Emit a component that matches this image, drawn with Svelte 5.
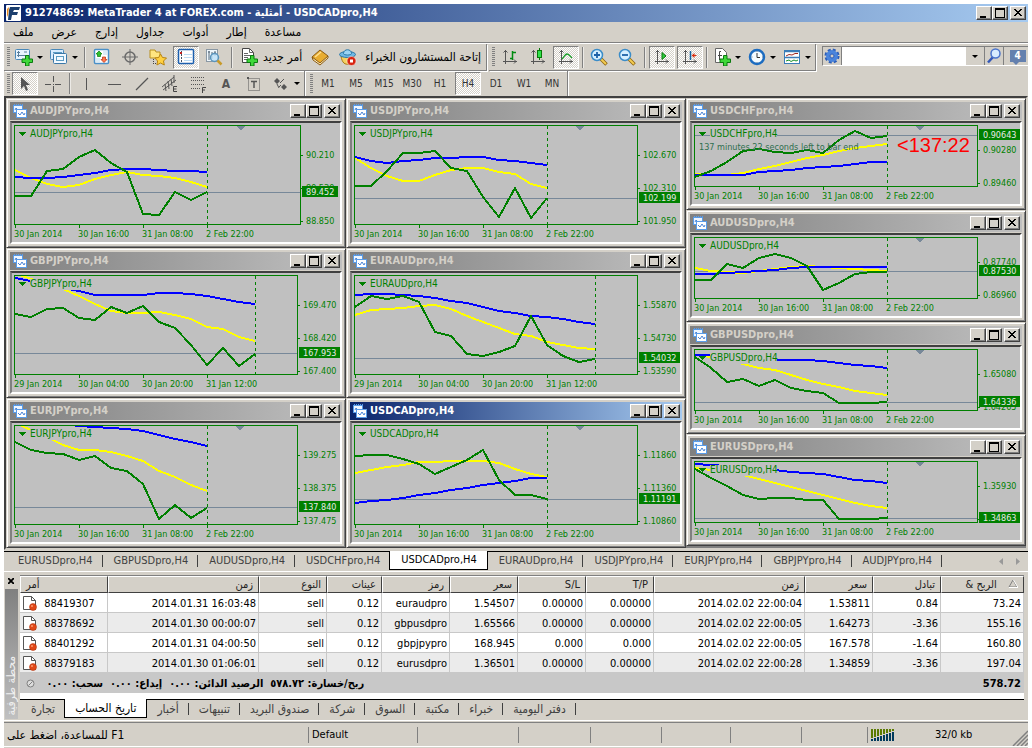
<script>
  const shortDates = ['30 Jan 2014', '30 Jan 16:00', '31 Jan 08:00', '2 Feb 22:00'];
  const longDates = ['29 Jan 2014', '30 Jan 04:00', '30 Jan 20:00', '31 Jan 12:00'];

  // series hold one y value per bar, bars are 16px apart
  const columns = [
    [
      {
        name: 'AUDJPYpro,H4', size: 'tall', narrow: true, dates: shortDates, price: 67, last: '89.452', marker: 226,
        ticks: [[30, '90.210'], [63, '89.530'], [96, '88.850']],
        yellow: [45, 53, 59, 62, 60, 54, 50, 47, 50, 51, 53, 57, 62],
        blue: [52, 53, 53, 52, 50, 48, 45, 44, 44, 45, 46, 46, 47],
        green: [71, 71, 46, 44, 32, 25, 38, 47, 89, 90, 67, 75, 67]
      },
      {
        name: 'GBPJPYpro,H4', size: 'tall', dates: longDates, price: 78, last: '167.953',
        ticks: [[30, '169.470'], [63, '168.420'], [96, '167.400']],
        yellow: [-2, 4, 10, 14, 21, 29, 36, 38, 38, 37, 40, 44, 52, 54, 62, 66],
        blue: [3, 6, 9, 13, 16, 20, 20, 20, 20, 18, 18, 19, 21, 24, 27, 29],
        green: [39, 42, 34, 33, 43, 45, 32, 38, 31, 47, 53, 70, 90, 73, 91, 79]
      },
      {
        name: 'EURJPYpro,H4', size: 'tall', dates: shortDates, price: 82, last: '137.840', marker: 225,
        ticks: [[30, '139.275'], [63, '138.375'], [96, '137.475']],
        yellow: [-2, 5, 12, 20, 25, 25, 27, 31, 36, 46, 52, 60, 66],
        blue: [-6, -5, -3, -1, 1, 2, 3, 4, 6, 10, 14, 17, 21],
        green: [17, 25, 28, 29, 35, 31, 43, 46, 59, 94, 80, 93, 83]
      }
    ],
    [
      {
        name: 'USDJPYpro,H4', size: 'tall', dates: shortDates, price: 73, last: '102.199', marker: 225,
        ticks: [[30, '102.670'], [63, '102.310'], [96, '101.950']],
        yellow: [33, 43, 51, 56, 56, 50, 45, 43, 43, 47, 49, 59, 63],
        blue: [32, 36, 38, 36, 35, 33, 33, 32, 32, 35, 36, 38, 40],
        green: [61, 61, 46, 28, 28, 26, 43, 46, 72, 92, 63, 93, 73]
      },
      {
        name: 'EURAUDpro,H4', size: 'tall', dates: longDates, price: 83, last: '1.54032',
        ticks: [[30, '1.55870'], [63, '1.54730'], [96, '1.53590']],
        yellow: [40, 35, 34, 33, 31, 30, 34, 41, 47, 53, 59, 61, 67, 70, 73, 74],
        blue: [20, 19, 19, 20, 21, 23, 26, 28, 32, 36, 38, 41, 42, 44, 47, 49],
        green: [32, 21, 24, 21, 27, 57, 61, 79, 81, 77, 71, 41, 70, 81, 87, 84]
      },
      {
        name: 'USDCADpro,H4', size: 'tall', active: true, dates: shortDates, price: 74, last: '1.11191', marker: 225,
        ticks: [[30, '1.11860'], [63, '1.11360'], [96, '1.10860']],
        yellow: [48, 45, 42, 40, 37, 37, 36, 36, 36, 38, 44, 49, 52],
        blue: [78, 76, 75, 73, 70, 68, 65, 63, 60, 58, 56, 53, 53],
        green: [31, 30, 30, 34, 39, 49, 42, 35, 25, 55, 70, 70, 74]
      }
    ],
    [
      {
        name: 'USDCHFpro,H4', size: 'short', dates: shortDates, price: 10, last: '0.90643', marker: 225, timer: true,
        ticks: [[25, '0.90280'], [58, '0.89460']],
        yellow: [49, 50, 50, 48, 44, 41, 37, 33, 30, 26, 23, 21, 19],
        blue: [50, 50, 50, 50, 47, 46, 45, 43, 42, 41, 39, 37, 37],
        green: [52, 46, 37, 26, 24, 27, 28, 25, 28, 15, 6, 13, 11]
      },
      {
        name: 'AUDUSDpro,H4', size: 'short', dates: shortDates, price: 34, last: '0.87530', marker: 225,
        ticks: [[25, '0.87740'], [58, '0.86960']],
        yellow: [31, 34, 35, 36, 34, 32, 30, 29, 30, 31, 32, 33, 34],
        blue: [37, 37, 36, 35, 34, 33, 31, 30, 30, 30, 30, 30, 30],
        green: [43, 43, 27, 31, 21, 17, 21, 29, 53, 46, 37, 35, 35]
      },
      {
        name: 'GBPUSDpro,H4', size: 'short', dates: shortDates, price: 53, last: '1.64336', marker: 225,
        ticks: [[25, '1.65080'], [58, '1.64265']],
        yellow: [6, 8, 11, 15, 19, 21, 26, 31, 35, 38, 42, 44, 46],
        blue: [6, 6, 8, 9, 10, 11, 11, 11, 12, 14, 16, 17, 19],
        green: [8, 19, 33, 30, 37, 31, 39, 42, 44, 54, 54, 54, 53]
      },
      {
        name: 'EURUSDpro,H4', size: 'short', dates: shortDates, price: 57, last: '1.34863', marker: 225,
        ticks: [[25, '1.35930'], [58, '']],
        yellow: [7, 9, 11, 14, 18, 22, 26, 30, 34, 38, 42, 45, 47],
        blue: [3, 4, 5, 6, 8, 9, 11, 12, 13, 16, 19, 20, 22],
        green: [8, 17, 25, 34, 38, 37, 37, 39, 39, 58, 58, 58, 57]
      }
    ]
  ];

  const line = (ys) => ys.map((y, i) => `${i * 16},${y}`).join(' ');

  const menu = ['ملف', 'عرض', 'إدارج', 'جداول', 'أدوات', 'إطار', 'مساعدة'];
  const frames = ['M1', 'M5', 'M15', 'M30', 'H1', 'H4', 'D1', 'W1', 'MN'];
  const chartTabs = ['EURUSDpro,H4', 'GBPUSDpro,H4', 'AUDUSDpro,H4', 'USDCHFpro,H4', 'USDCADpro,H4',
    'EURAUDpro,H4', 'USDJPYpro,H4', 'EURJPYpro,H4', 'GBPJPYpro,H4', 'AUDJPYpro,H4'];
  const terminalTabs = ['تجارة', 'تاريخ الحساب', 'أخبار', 'تنبيهات', 'صندوق البريد', 'شركة', 'السوق', 'مكتبة', 'خبراء', 'دفتر اليومية'];

  const heads = ['أمر', 'زمن', 'النوع', 'عينات', 'رمز', 'سعر', 'S/L', 'T/P', 'زمن', 'سعر', 'تبادل', 'الربح &'];
  const widths = [88, 151, 68, 55, 68, 68, 68, 68, 151, 68, 68, 83];
  const orders = [
    ['88419307', '2014.01.31 16:03:48', 'sell', '0.12', 'euraudpro', '1.54507', '0.00000', '0.00000', '2014.02.02 22:00:04', '1.53811', '0.84', '73.24'],
    ['88378692', '2014.01.30 00:00:07', 'sell', '0.12', 'gbpusdpro', '1.65566', '0.00000', '0.00000', '2014.02.02 22:00:05', '1.64273', '-3.36', '155.16'],
    ['88401292', '2014.01.31 04:00:50', 'sell', '0.12', 'gbpjpypro', '168.945', '0.000', '0.000', '2014.02.02 22:00:05', '167.578', '-1.64', '160.80'],
    ['88379183', '2014.01.30 01:06:01', 'sell', '0.12', 'eurusdpro', '1.36501', '0.00000', '0.00000', '2014.02.02 22:00:28', '1.34859', '-3.36', '197.04']
  ];

  let activeFrame = $state('H4');
  let activeChart = $state('USDCADpro,H4');
  let activeTab = $state('تاريخ الحساب');
  let search = $state('');
</script>

{#snippet winButtons()}
  <span class="winButtons">
    <button aria-label="Minimize"><svg width="12" height="10"><path d="M2 8h6v2H2z" /></svg></button>
    <button aria-label="Maximize"><svg width="12" height="10"><path d="M1 0h10v10H1zM2 2v7h8V2z" fill-rule="evenodd" /></svg></button>
    <button class="close" aria-label="Close"><svg width="12" height="10"><path d="M2 1l7 7M3 1l7 7M9 1L2 8M10 1L3 8" stroke="#000" shape-rendering="crispEdges" /></svg></button>
  </span>
{/snippet}

{#snippet plus()}
  <path d="M10.500 7.500h3.500v3.500h3.500v3.500H14V18h-3.500v-3.500H7V11h3.500z" fill="#3fd83a" stroke="#0b7a10" />
{/snippet}

{#snippet axes()}
  <path d="M4.500 2v14M2 13.500h14M2.500 4.500l2-2 2 2M13 11.500l2 2-2 2" fill="none" stroke="#555" />
{/snippet}

{#snippet icon(name)}
  <svg class="icon" width="18" height="18" viewBox="0 0 18 18">
    {#if name === 'newChart'}
      <rect x="0.500" y="1.500" width="14" height="10" rx="1" fill="#e8f4ff" stroke="#4a88b8" />
      <path d="M3.500 3v6M2 7.500h10M2 4.500h3M9 4h3" stroke="#5a7f9c" fill="none" />
      {@render plus()}
    {:else if name === 'profiles'}
      <rect x="0.500" y="1.500" width="13" height="10" rx="1" fill="#d8ecff" stroke="#4a88b8" />
      <rect x="3.500" y="5.500" width="13" height="10" rx="1" fill="#f2f9ff" stroke="#3a78a8" />
      <path d="M3 4.500h9M6 8.500h8M6 12.500h8M6.500 8v5M13.500 8v5" stroke="#5a9cc4" />
    {:else if name === 'market'}
      <rect x="1.500" y="1.500" width="14" height="14" rx="1" fill="#fff" stroke="#4a90c8" stroke-width="1.500" />
      <path d="M10 4h4M10 6h4M3 11h4M3 13h4" stroke="#b8d8ee" />
      <path d="M6 3l3 3H7.500v2.500h-3V6H3z" fill="#2fc02f" stroke="#087808" stroke-width=".7" />
      <path d="M11 14.500l-3-3h1.500V9h3v2.500H14z" fill="#ff7a50" stroke="#b82808" stroke-width=".7" />
    {:else if name === 'target'}
      <circle cx="9" cy="9" r="5" fill="none" stroke="#6a6a6a" stroke-width="1.500" />
      <path d="M9 1v16M1 9h16" stroke="#6a6a6a" />
    {:else if name === 'favorites'}
      <path d="M1 2h5l1 2h4v6H1z" fill="#ffe680" stroke="#b89020" />
      <path d="M4.500 11v5M4 15.500h3" stroke="#444" stroke-dasharray="1 1" />
      <path d="M11.500 6l2 3.500 4 .5-3 3 .8 4-3.800-2-3.600 2 .7-4-2.800-3 3.900-.5z" fill="#ffd040" stroke="#b88410" />
    {:else if name === 'navigator'}
      <rect x="1.500" y="1.500" width="15" height="14" rx="1" fill="#fff" stroke="#1c5fae" stroke-width="1.500" />
      <path d="M4.500 3v12" stroke="#456" stroke-dasharray="2 1" />
      <path d="M7 6.500h8M7 9.500h8M7 12.500h8" stroke="#bcdcf4" />
      <path d="M3 4h2v2H3z" fill="#c02020" />
    {:else if name === 'tester'}
      <rect x="1.500" y="1.500" width="11" height="12" fill="#eef6fb" stroke="#8a98a4" />
      <path d="M4 3v9M3 4h2M7 4v7M10 3v5M9 5h2" stroke="#567" />
      <circle cx="9.500" cy="9.500" r="4" fill="#c0e2f8" fill-opacity=".85" stroke="#5a94bc" stroke-width="1.500" />
      <path d="M12.500 12.500l4 4" stroke="#c89a28" stroke-width="2.500" />
    {:else if name === 'newOrder'}
      <path d="M2.500.500h7l4 4v10h-11z" fill="#fff" stroke="#444" />
      <path d="M9.500.500v4h4M4 5.500h4M4 7.500h7M4 9.500h4M4 11.500h3" fill="none" stroke="#666" />
      {@render plus()}
    {:else if name === 'book'}
      <path d="M1 9l8-7 8 6-8 8z" fill="#e8ac30" stroke="#8c5a10" />
      <path d="M1 9l1 3 7 5 8-7V8l-8 7z" fill="#fff0c0" stroke="#8c5a10" />
      <path d="M4 9l6-5" stroke="#ffe090" stroke-width="1.500" />
    {:else if name === 'expert'}
      <path d="M2 8c1 7 4 9 8 8l5-8z" fill="#f4d060" stroke="#a87a18" />
      <ellipse cx="8.500" cy="6.500" rx="8" ry="3" fill="#70b8e4" stroke="#2a78a8" />
      <path d="M4.500 5.500c0-5 8-5 8 0 0 2-8 2-8 0z" fill="#9cd4f4" stroke="#2a78a8" />
      <circle cx="12.500" cy="13" r="4.500" fill="#d82410" stroke="#fff" stroke-width=".5" />
      <rect x="11" y="11.500" width="3" height="3" fill="#fff" />
    {:else if name === 'bars'}
      {@render axes()}
      <path d="M11.500 3v9M9 10.500h3M12 4.500h3" stroke="#008a10" stroke-width="1.500" />
    {:else if name === 'candles'}
      {@render axes()}
      <path d="M10.500 0v12" stroke="#087808" />
      <rect x="8.500" y="2.500" width="4" height="7" fill="#2fe04a" stroke="#087808" />
    {:else if name === 'lineChart'}
      {@render axes()}
      <path d="M5 11c3-3 3-5 5-5s3 2 5 4" fill="none" stroke="#18a028" stroke-width="1.300" />
    {:else if name === 'zoomIn' || name === 'zoomOut'}
      <path d="M11 11l5.500 5.500" stroke="#8c6410" stroke-width="3.500" />
      <path d="M11 11l5 5" stroke="#f4cc50" stroke-width="2" />
      <circle cx="7" cy="7" r="5.500" fill="#d4f0ff" stroke="#3a8cc8" stroke-width="1.500" />
      <path d={name === 'zoomIn' ? 'M4 7h6M7 4v6' : 'M4 7h6'} stroke="#1c62a8" stroke-width="1.800" />
    {:else if name === 'autoScroll'}
      {@render axes()}
      <path d="M9 4.500l4 3.500-4 3.500z" fill="#30cc40" stroke="#087808" />
    {:else if name === 'shift'}
      {@render axes()}
      <path d="M9.500 3v9" stroke="#1464a0" stroke-width="1.500" />
      <path d="M10.500 7.500l3-2.500v2h2v1h-2v2z" fill="#d83010" />
    {:else if name === 'indicators'}
      <path d="M2.500.500h7l4 4v10h-11z" fill="#fff" stroke="#666" />
      <path d="M8 3.500H6.500V12M5 7.500h4" fill="none" stroke="#444" />
      {@render plus()}
    {:else if name === 'clock'}
      <circle cx="9" cy="9" r="7" fill="#f4fbff" stroke="#1c6cc0" stroke-width="2.500" />
      <path d="M9 5v4.500h3" fill="none" stroke="#333" />
      <path d="M9 3v1M9 14v1M3.500 9h1M14 9h1" stroke="#789" />
    {:else if name === 'template'}
      <rect x="1.500" y="2.500" width="15" height="13" fill="#fff" stroke="#3a7cb8" />
      <path d="M1 3.500h16M1 9.500h16" stroke="#3a7cb8" stroke-width="1.500" />
      <path d="M3 8l3-1.500 3 .5 3-1.500h3" fill="none" stroke="#a02820" />
      <path d="M3 13l3-1 2 1.500 3-1.500 2 1 2-1" fill="none" stroke="#18902a" />
    {:else if name === 'gear'}
      <circle cx="9" cy="9" r="6" fill="none" stroke="#2a5cb8" stroke-width="3" stroke-dasharray="2.800 1.912" />
      <circle cx="9" cy="9" r="4" fill="none" stroke="#4a84dc" stroke-width="4" />
      <circle cx="9" cy="9" r="2" fill="#d4d0c8" stroke="#2a5cb8" />
    {:else if name === 'search'}
      <path d="M8 10l-5 5.500" stroke="#3458b8" stroke-width="2.500" />
      <circle cx="10.500" cy="6.500" r="4.500" fill="#d8ecff" stroke="#4a74cc" stroke-width="1.500" />
    {:else if name === 'pointer'}
      <path d="M5 2v12l3-3 2 5 2-1-2-5h4z" fill="#555" />
    {:else if name === 'cross'}
      <path d="M9.500 1v6M9.500 11v6M1 9.500h6M11 9.500h6M9.500 9v1" stroke="#555" />
    {:else if name === 'vline'}
      <path d="M9.500 3v12" stroke="#555" />
    {:else if name === 'hline'}
      <path d="M3 9.500h13" stroke="#555" />
    {:else if name === 'trend'}
      <path d="M3 15L15 3" stroke="#555" stroke-width="1.200" />
    {:else if name === 'channel'}
      <path d="M1 12L13 2M2 15L15 5M4 9l1 7M7 6l1 8M10 4l1 7M13 0v8" stroke="#555" />
      <path d="M16 11.500h-3.500v5H16M12.500 14H15.500" fill="none" stroke="#444" />
    {:else if name === 'fibo'}
      <path d="M2 2.500h14M2 5.500h14M2 9.500h14M2 13.500h9" stroke="#555" stroke-dasharray="1 1" />
      <path d="M17 12.500h-3.500V18M13.500 15H16" fill="none" stroke="#444" />
    {:else if name === 'label'}
      <rect x="3.500" y="3.500" width="11" height="12" fill="none" stroke="#555" stroke-dasharray="1 1" />
      <path d="M6 6.500h6M9 6.500V13" stroke="#555" stroke-width="1.500" />
      <path d="M2 2h2v2H2z" fill="#555" />
    {:else if name === 'shapes'}
      <path d="M5 3l3 3-3 3-3-3zM12 9l3 3-3 3-3-3z" fill="#555" />
      <path d="M8 8l4-4M7 12l2-2M5 9l2 4" stroke="#555" />
    {/if}
  </svg>
{/snippet}

{#snippet tool(name, label, pressed = false)}
  <button class="tool" class:pressed aria-label={label}>{@render icon(name)}</button>
{/snippet}

{#snippet drop(name, label)}
  <button class="tool drop" aria-label={label}>{@render icon(name)}<i class="arrow"></i></button>
{/snippet}

<main>
  <header class="title">
    <svg width="15" height="16" viewBox="0 0 15 16">
      <rect width="15" height="16" rx="1" fill="#fff" />
      <path d="M4 2h10l-1 3H8L7 7h5l-1 3H6l-1 5H2L3 5z" fill="#1c3f6e" />
      <path d="M1 4l2-2-1 8-1 2z" fill="#e88a20" />
    </svg>
    <h1>91274869: MetaTrader 4 at FOREX.com - أمثلية - USDCADpro,H4</h1>
    {@render winButtons()}
  </header>

  <nav class="menu">
    {#each menu as item}
      <button>{item}</button>
    {/each}
  </nav>

  <div class="bands">
    <div class="band">
      <i class="grip"></i>
      {@render drop('newChart', 'New chart')}
      {@render drop('profiles', 'Profiles')}
      <i class="sep"></i>
      {@render tool('market', 'Market watch')}
      {@render tool('target', 'Data window')}
      {@render tool('favorites', 'Navigator')}
      {@render tool('navigator', 'Terminal', true)}
      {@render tool('tester', 'Strategy tester')}
      <i class="sep"></i>
      <button class="tool wide">{@render icon('newOrder')}<span>أمر جديد</span></button>
      {@render tool('book', 'MetaEditor')}
      <button class="tool wide experts">{@render icon('expert')}<span>إتاحة المستشارون الخبراء</span></button>
    </div>
    <div class="band">
      <i class="grip"></i>
      {@render tool('bars', 'Bar chart')}
      {@render tool('candles', 'Candlesticks')}
      {@render tool('lineChart', 'Line chart', true)}
      <i class="sep thin"></i>
      {@render tool('zoomIn', 'Zoom in')}
      {@render tool('zoomOut', 'Zoom out')}
      <i class="sep"></i>
      {@render tool('autoScroll', 'Auto scroll', true)}
      {@render tool('shift', 'Chart shift', true)}
      <i class="sep thin"></i>
      {@render drop('indicators', 'Indicators')}
      {@render drop('clock', 'Periods')}
      {@render drop('template', 'Templates')}
    </div>
    <div class="searchBox">
      <button aria-label="Options">{@render icon('gear')}</button>
      <input type="text" aria-label="Search" bind:value={search} />
      <button class="pick" aria-label="History"><i class="arrow"></i></button>
      <button aria-label="Find">{@render icon('search')}</button>
      <button class="chat"><b>4</b></button>
    </div>
  </div>

  <div class="bands second">
    <div class="band">
      <i class="grip"></i>
      {@render tool('pointer', 'Cursor', true)}
      {@render tool('cross', 'Crosshair')}
      <i class="sep thin"></i>
      {@render tool('vline', 'Vertical line')}
      {@render tool('hline', 'Horizontal line')}
      {@render tool('trend', 'Trendline')}
      {@render tool('channel', 'Equidistant channel')}
      {@render tool('fibo', 'Fibonacci retracement')}
      <button class="tool letter">A</button>
      {@render tool('label', 'Text label')}
      {@render drop('shapes', 'Arrows')}
    </div>
    <div class="band">
      <i class="grip"></i>
      {#each frames as frame}
        <button class="tool frame" class:pressed={frame === activeFrame} onclick={() => (activeFrame = frame)}>{frame}</button>
      {/each}
    </div>
  </div>

  <section class="mdi">
    {#each columns as column}
      <div class="column">
        {#each column as chart}
          <article class="window" class:active={chart.active}>
            <div class="caption">
              <svg width="14" height="14" viewBox="0 0 14 14">
                <rect x="0.500" y="1.500" width="9" height="7" fill="#eef6ff" stroke="#5a9ce8" />
                <path d="M1 1h9" stroke="#5a9ce8" stroke-width="2" stroke-dasharray="1 1" />
                <path d="M2 6l1-2 2 2 1-1" fill="none" stroke="#4a84d8" />
                <rect x="3.500" y="5.500" width="10" height="8" fill="#fff" stroke="#5a9ce8" />
                <path d="M5 9l2 2 2-3 2 3 1-2" fill="none" stroke="#4a84d8" />
              </svg>
              <h2>{chart.name}</h2>
              {@render winButtons()}
            </div>
            <div class="client {chart.size}" class:narrow={chart.narrow}>
              <div class="plot">
                <svg width="100%" height="100%" shape-rendering="crispEdges">
                  <g transform="translate(0 -1)">
                    <rect x="0" y={chart.price} width="100%" height="1" fill="#778899" />
                    <polyline points={line(chart.yellow)} fill="none" stroke="#ffff00" stroke-width="2" />
                    <polyline points={line(chart.blue)} fill="none" stroke="#0000ff" stroke-width="2" />
                    <rect x="15" y="4" width="67" height="11" fill="#c0c0c0" />
                    <polyline points={line(chart.green)} fill="none" stroke="#008000" stroke-width="2" />
                    <path d={`M${chart.green.length * 16 - 16}.5 1v100`} stroke="#008000" stroke-dasharray="3 3" />
                    {#if chart.marker}
                      <path d={`M${chart.marker - 5} 1h9l-4 5z`} fill="#778899" />
                    {/if}
                    <path d="M3 7h8l-4 4z" fill="#008000" />
                    <text class="name" x="15" y="12">{chart.name}</text>
                    {#if chart.timer}
                      <text class="note" x="4" y="25">137 minutes 22 seconds left to bar end</text>
                      <text class="countdown" x="202" y="27">&lt;137:22</text>
                    {/if}
                  </g>
                </svg>
              </div>
              <svg class="prices" width="100%" height="100%">
                {#each chart.ticks as [y, text]}
                  <rect x="0" {y} width="2" height="1" />
                  <text x="5" y={y + 3}>{text}</text>
                {/each}
                <rect x="1" y={chart.price - 6} width={chart.narrow ? 36 : 41} height="11" />
                <text class="last" x="5" y={chart.price + 3}>{chart.last}</text>
              </svg>
              <svg class="times" width="100%" height="17">
                {#each chart.dates as date, i}
                  <rect x={i * 64 + 1} y="0" width="1" height="3" />
                  <text x={i * 64} y="12">{date}</text>
                {/each}
              </svg>
            </div>
          </article>
        {/each}
      </div>
    {/each}
  </section>

  <nav class="chartTabs">
    {#each chartTabs as tab}
      <button class:active={tab === activeChart} onclick={() => (activeChart = tab)}>{tab}</button>
    {/each}
    <span class="scroll">
      <button aria-label="Previous"><svg width="4" height="7"><path d="M4 0v7L0 3.500z" /></svg></button>
      <button aria-label="Next"><svg width="4" height="7"><path d="M0 0v7l4-3.500z" /></svg></button>
    </span>
  </nav>

  <section class="terminal">
    <aside>
      <button aria-label="Close terminal"><svg width="6" height="6"><path d="M0 0l6 6M6 0L0 6" stroke="#000" stroke-width="1.800" /></svg></button>
      <div class="side"><span>محطة طرفية</span></div>
    </aside>
    <div class="panel">
      <table>
        <colgroup>
          {#each widths as w}
            <col style="width: {w}px" />
          {/each}
        </colgroup>
        <thead>
          <tr>
            {#each heads as head, i}
              <th>
                <bdi dir="rtl">{head}</bdi>
                {#if i === 11}
                  <svg width="10" height="9"><path d="M5 1L1 8h8z" fill="none" stroke="#808080" /><path d="M1 8.500h9L5.500 1" fill="none" stroke="#fff" /></svg>
                {/if}
              </th>
            {/each}
          </tr>
        </thead>
        <tbody>
          {#each orders as order}
            <tr>
              {#each order as cell, i}
                <td>
                  {#if i === 0}
                    <svg width="14" height="15" viewBox="0 0 14 15">
                      <path d="M.500.500h8l4 4v9H.500z" fill="#fff" stroke="#555" />
                      <path d="M8.500.500v4h4" fill="none" stroke="#555" />
                      <circle cx="10" cy="11" r="3.500" fill="#e04818" stroke="#a82c08" stroke-width=".5" />
                      <circle cx="9" cy="10" r="1" fill="#ff9a70" />
                    </svg>
                  {/if}
                  {cell}
                </td>
              {/each}
            </tr>
          {/each}
        </tbody>
        <tfoot>
          <tr>
            <td colspan="11">
              <svg width="9" height="9"><circle cx="4.500" cy="4.500" r="3.500" fill="#ddd" stroke="#808080" /><path d="M2.500 6.500l4-4" stroke="#808080" /></svg>
              <span dir="rtl">ربح/خسارة: ٥٧٨.٧٢  الرصيد الدائن: ٠.٠٠  إيداع: ٠.٠٠  سحب: ٠.٠٠</span>
            </td>
            <td>578.72</td>
          </tr>
        </tfoot>
      </table>
      <nav class="terminalTabs">
        {#each terminalTabs as tab}
          <button class:active={tab === activeTab} onclick={() => (activeTab = tab)}>{tab}</button>
        {/each}
      </nav>
    </div>
  </section>

  <footer>
    <span class="help">للمساعدة، اضغط على F1</span>
    <span class="profile">Default</span>
    <span class="w101"></span>
    <span class="w72"></span>
    <span class="w71"></span>
    <span class="w69"></span>
    <span class="w71"></span>
    <span class="w66"></span>
    <span class="traffic">
      <svg width="24" height="12" shape-rendering="crispEdges">
        {#each [0, 1, 2, 3, 4, 5, 6, 7] as n}
          <rect x={n * 3} y="0" width="2" height={9 - n} fill="#5a7a00" />
          <rect x={n * 3} y={10 - n} width="2" height={2 + n} fill="#003a5c" />
        {/each}
      </svg>
      32/0 kb
    </span>
    <svg class="resize" width="16" height="16"><path d="M1 16L16 1M5 16L16 5M9 16l7-7M13 16l3-3" stroke="#808080" stroke-width="1.500" /></svg>
  </footer>
</main>

<style>
  :global(body) {
    margin: 0;
    background: #fff;
  }

  main {
    margin: 4px 4px 0;
    background: #d4d0c8;
    color: #000;
    font: 11px/14px "DejaVu Sans Condensed", "DejaVu Sans", sans-serif;
    overflow: hidden;
  }

  button, input {
    font: inherit;
    color: inherit;
    margin: 0;
    padding: 0;
    border: 0;
    border-radius: 0;
    background: none;
  }

  button {
    white-space: nowrap;
  }

  svg {
    display: block;
    flex: none;
  }

  .title {
    display: flex;
    align-items: center;
    gap: 4px;
    height: 18px;
    padding: 0 2px;
    background: linear-gradient(90deg, #0a246a, #a6caf0);
    color: #fff;
  }

  h1, h2 {
    flex: 1;
    margin: 0;
    font-size: 11px;
    font-weight: bold;
    white-space: nowrap;
  }

  .winButtons {
    display: flex;
  }

  .winButtons button {
    display: flex;
    width: 16px;
    height: 14px;
    border: 1px solid;
    border-color: #fff #404040 #404040 #fff;
    background: #d4d0c8;
    box-shadow: inset -1px -1px #808080;
    padding: 1px;
    box-sizing: border-box;
  }

  .winButtons .close {
    margin-left: 2px;
  }

  .menu {
    display: flex;
    gap: 18px;
    height: 20px;
    padding-left: 9px;
    border-bottom: 1px solid #808080;
    font-size: 12px;
  }

  .bands {
    display: flex;
    height: 28px;
    border-top: 1px solid #fff;
    box-sizing: border-box;
  }

  .second {
    height: 25px;
    border-top: 0;
  }

  .band {
    display: flex;
    align-items: center;
    padding-right: 1px;
    border-right: 1px solid #808080;
    border-bottom: 1px solid #808080;
    box-shadow: 1px 1px #fff;
  }

  .second .band {
    border-bottom: 0;
    box-shadow: 1px 0 #fff;
  }

  .band + .band {
    margin-left: 2px;
  }

  .grip {
    width: 3px;
    height: 20px;
    margin: 0 1px 0 3px;
    background: repeating-linear-gradient(#808080 0 1px, #d4d0c8 1px 2px);
  }

  .tool {
    display: flex;
    align-items: center;
    justify-content: center;
    width: 28px;
    height: 23px;
    flex: none;
    box-sizing: border-box;
  }

  .drop {
    width: 35px;
    justify-content: flex-start;
    padding-left: 4px;
    gap: 4px;
  }

  .wide {
    width: auto;
    justify-content: flex-start;
    padding: 0 4px 0 5px;
    gap: 5px;
    font-size: 12px;
  }

  .experts {
    gap: 8px;
  }

  .pressed {
    width: 26px;
    margin: 0 1px;
    border: 1px solid;
    border-color: #808080 #fff #fff #808080;
    background: repeating-conic-gradient(#fff 0 25%, #d4d0c8 0 50%) 0 0 / 2px 2px;
  }

  .arrow {
    border: 3px solid transparent;
    border-top-color: #000;
    border-bottom: 0;
  }

  .sep {
    width: 1px;
    height: 21px;
    margin: 0 3px;
    background: #808080;
    box-shadow: 1px 0 #eceae6;
  }

  .thin {
    margin: 0 2px;
  }

  .frame, .letter {
    font-size: 10px;
    color: #333;
  }

  .letter {
    font-size: 12px;
    font-weight: bold;
    color: #555;
  }

  .searchBox {
    display: flex;
    flex: 1;
    height: 20px;
    margin: 2px 3px 0 6px;
    border: 1px solid;
    border-color: #808080 #fff #fff #808080;
    box-sizing: border-box;
  }

  .searchBox button {
    display: flex;
    align-items: center;
    justify-content: center;
    width: 19px;
    border-right: 1px solid #808080;
    box-sizing: border-box;
  }

  .searchBox input {
    flex: 1;
    min-width: 0;
    background: #fff;
  }

  .searchBox .chat {
    width: 27px;
    border: 0;
  }

  .chat b {
    position: relative;
    width: 16px;
    height: 12px;
    background: #6480ae;
    color: #fff;
    font-size: 10px;
    line-height: 12px;
  }

  .chat b::after {
    content: '';
    position: absolute;
    left: 3px;
    top: 12px;
    border: 3px solid transparent;
    border-top-color: #6480ae;
    border-bottom: 0;
  }

  .mdi {
    display: flex;
    border: 2px solid;
    border-color: #404040 #d4d0c8 #d4d0c8 #404040;
    background: #808080;
  }

  .column {
    flex: 1;
    min-width: 0;
  }

  .window {
    border: 1px solid;
    border-color: #d4d0c8 #404040 #404040 #d4d0c8;
    box-shadow: inset 1px 1px #fff, inset -1px -1px #808080;
    background: #d4d0c8;
    padding: 3px;
  }

  .caption {
    display: flex;
    align-items: center;
    gap: 3px;
    height: 18px;
    padding: 0 2px 0 3px;
    margin-bottom: 1px;
    background: linear-gradient(90deg, #808080, #c0c0c0);
    color: #d4d0c8;
  }

  .active .caption {
    background: linear-gradient(90deg, #0a246a, #a6caf0);
    color: #fff;
  }

  .client {
    display: grid;
    grid-template-columns: 1fr 42px;
    grid-template-rows: 100px 17px;
    padding: 2px 0 0 2px;
    border: 2px solid;
    border-color: #404040 #fff #fff #808080;
    background: #c0c0c0;
  }

  .short {
    grid-template-rows: 62px 17px;
  }

  .narrow {
    grid-template-columns: 1fr 39px;
  }

  .plot {
    border: 1px solid #008000;
    overflow: hidden;
    min-width: 0;
  }

  .client text {
    fill: #008000;
    font-size: 9px;
  }

  .client text.name {
    font-size: 10px;
  }

  .client text.note {
    fill: #2f6f4f;
  }

  .client text.countdown {
    fill: #ff0000;
    font: 20px "Liberation Sans", sans-serif;
  }

  .client text.last {
    fill: #e8e8e8;
  }

  .prices, .times {
    fill: #008000;
    shape-rendering: crispEdges;
    overflow: visible;
  }

  .times {
    grid-column: span 2;
  }

  .chartTabs {
    display: flex;
    height: 20px;
    margin-top: 1px;
    border-top: 1px solid #000;
    box-sizing: border-box;
    padding-left: 3px;
    color: #404040;
  }

  .chartTabs > button, .terminalTabs button {
    position: relative;
    height: 18px;
    padding: 0 10px 0 11px;
  }

  .chartTabs > button::after, .terminalTabs button::after {
    content: '';
    position: absolute;
    right: 0;
    top: 3px;
    height: 12px;
    border-right: 1px solid #404040;
  }

  .chartTabs > button.active, .terminalTabs button.active {
    margin: -1px 0 0 -1px;
    height: 19px;
    border: 1px solid #000;
    border-top: 0;
    background: #fff;
    color: #000;
  }

  .chartTabs > button.active::after, .terminalTabs button.active::after {
    display: none;
  }

  .scroll {
    display: flex;
    gap: 13px;
    margin-left: auto;
    padding-right: 8px;
    fill: #999;
  }

  .terminal {
    display: flex;
    border-top: 1px solid #fff;
    border-bottom: 1px solid #fff;
    padding: 3px 4px 1px 1px;
  }

  aside {
    display: flex;
    flex-direction: column;
    width: 13px;
    margin-right: 2px;
  }

  aside button {
    display: flex;
    height: 14px;
    padding: 3px 0 0 3px;
    box-sizing: border-box;
  }

  .side {
    flex: 1;
    display: flex;
    align-items: flex-end;
    background: linear-gradient(#808080, #c0c0c0);
    color: #f0f0f0;
  }

  .side span {
    writing-mode: vertical-rl;
    transform: rotate(180deg);
    line-height: 13px;
    padding-top: 3px;
    font-size: 12px;
  }

  .panel {
    flex: 1;
    min-width: 0;
    border-top: 1px solid #808080;
    background: #fff;
  }

  table {
    width: 100%;
    table-layout: fixed;
    border-collapse: separate;
    border-spacing: 0;
    margin-bottom: 6px;
  }

  th {
    height: 17px;
    padding: 1px 5px 0;
    box-sizing: border-box;
    border: 1px solid;
    border-color: #fff #404040 #404040 #fff;
    background: #d4d0c8;
    font-weight: normal;
    text-align: right;
    line-height: 14px;
    white-space: nowrap;
    color: #222;
  }

  th:first-child {
    text-align: left;
  }

  th svg {
    display: inline-block;
    margin-left: 8px;
  }

  td {
    height: 20px;
    padding: 2px 2px 0 3px;
    box-sizing: border-box;
    border-right: 1px solid #c8c8c8;
    border-bottom: 1px solid #c8c8c8;
    text-align: right;
    white-space: nowrap;
  }

  td:first-child {
    text-align: left;
  }

  td svg {
    display: inline-block;
    vertical-align: middle;
    margin-right: 4px;
  }

  tbody tr:nth-child(even) {
    background: #ebebeb;
  }

  tfoot td {
    background: #c8c8c8;
    font-weight: bold;
  }

  tfoot svg {
    margin: 0 8px 0 3px;
  }

  tfoot span {
    white-space: pre;
  }

  .terminalTabs {
    display: flex;
    height: 20px;
    border-top: 1px solid #000;
    box-sizing: border-box;
    padding-left: 1px;
    background: #d4d0c8;
    color: #404040;
    font-size: 12px;
  }

  .terminalTabs button {
    padding: 0 10px;
  }

  footer {
    display: flex;
    align-items: center;
    height: 22px;
    margin: 1px 0 2px;
    padding-top: 1px;
    border-top: 1px solid #808080;
    border-bottom: 1px solid #fff;
  }

  footer span {
    height: 16px;
    padding-left: 3px;
    border-left: 1px solid #808080;
    box-sizing: border-box;
    line-height: 16px;
  }

  footer .help {
    width: 304px;
    border: 0;
    font-size: 12px;
  }

  .profile {
    width: 109px;
  }

  .w101 {
    width: 101px;
  }

  .w72 {
    width: 72px;
  }

  .w71 {
    width: 71px;
  }

  .w69 {
    width: 69px;
  }

  .w66 {
    width: 66px;
  }

  .traffic {
    display: flex;
    flex: 1;
    align-items: center;
    gap: 40px;
  }

  .resize {
    align-self: flex-end;
  }
</style>
